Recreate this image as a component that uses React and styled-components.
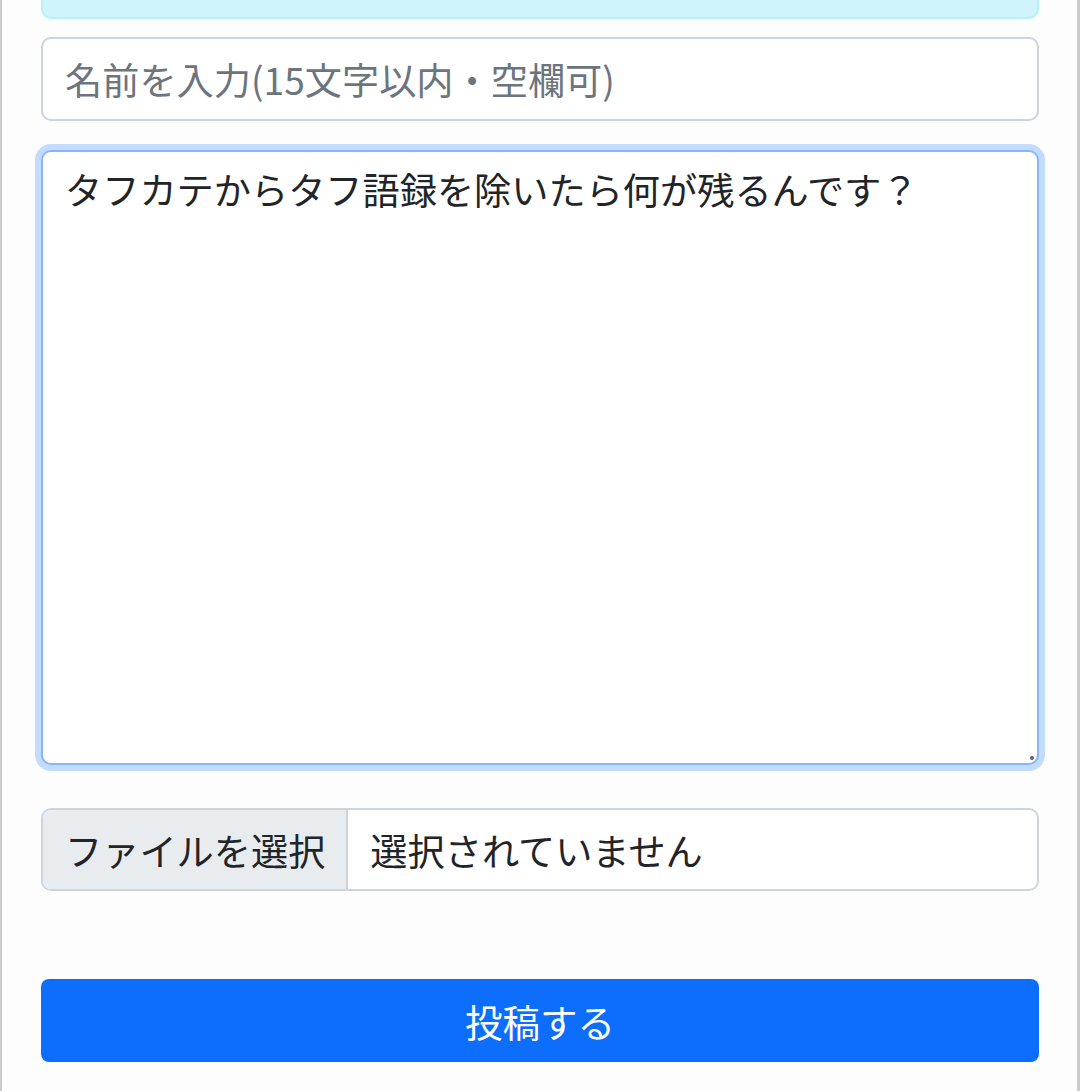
import React, { useEffect, useRef } from 'react';
import styled, { createGlobalStyle } from 'styled-components';

const GlobalStyle = createGlobalStyle`
	html, body {
		margin: 0;
		padding: 0;
		background: #fdfdfd;
	}
	body {
		font-family: "Noto Sans CJK JP", "Noto Sans", sans-serif;
		color: #212529;
	}
	* {
		box-sizing: border-box;
	}
`;

const Page = styled.div`
	min-height: 1091px;
	border-left: 2px solid #cbcbcb;
	border-right: 3px solid #cbcbcb;
	background: #fdfdfd;
	padding: 0 38px 0 39px;
`;

const Alert = styled.div`
	height: 19px;
	background: #cff4fc;
	border: 2px solid #b6effb;
	border-top: none;
	border-radius: 0 0 10px 10px;
`;

const Form = styled.form`
	display: flex;
	flex-direction: column;
`;

const NameInput = styled.input`
	display: block;
	width: 100%;
	height: 84px;
	margin-top: 18px;
	padding: 0 22px;
	font-family: inherit;
	font-size: 37.2px;
	color: #212529;
	background: #fff;
	border: 2px solid #ced4da;
	border-radius: 10px;
	outline: none;

	&::placeholder {
		color: #6c757d;
		opacity: 1;
	}
`;

const AreaWrap = styled.div`
	position: relative;
	margin-top: 29px;

	/* resize grip dot */
	&::after {
		content: '';
		position: absolute;
		right: 5px;
		bottom: 5px;
		width: 4px;
		height: 4px;
		border-radius: 50%;
		background: #5f5f5f;
		pointer-events: none;
	}
`;

const TextArea = styled.textarea`
	display: block;
	width: 100%;
	height: 615px;
	padding: 10px 22px;
	font-family: inherit;
	font-size: 37.2px;
	line-height: 1.5;
	color: #212529;
	caret-color: #212529;
	background: #fff;
	border: 2px solid #86b7fe;
	border-radius: 10px;
	box-shadow: 0 0 0 6px #c2dbfe;
	outline: none;
	resize: none;
`;

const FileRow = styled.label`
	display: flex;
	align-items: stretch;
	height: 83px;
	margin-top: 43px;
	background: #fff;
	border: 2px solid #ced4da;
	border-radius: 10px;
	overflow: hidden;
	font-size: 37.2px;
	cursor: pointer;
`;

const FileButton = styled.span`
	display: flex;
	align-items: center;
	padding: 0 21px 0 22px;
	background: #e9ecef;
	border-right: 2px solid #ced4da;
	color: #212529;
`;

const FileName = styled.span`
	display: flex;
	align-items: center;
	padding: 0 22px;
	color: #212529;
`;

const HiddenFile = styled.input`
	display: none;
`;

const SubmitButton = styled.button`
	display: block;
	width: 100%;
	height: 83px;
	margin-top: 88px;
	background: #0d6efd;
	color: #fff;
	border: none;
	border-radius: 8px;
	font-family: inherit;
	font-size: 37.5px;
	cursor: pointer;
`;

const App = () => {
	const areaRef = useRef(null);
	const message = 'タフカテからタフ語録を除いたら何が残るんです？';

	useEffect(() => {
		const el = areaRef.current;
		if (el) {
			el.focus();
			el.setSelectionRange(message.length, message.length);
		}
	}, []);

	return (
		<>
			<GlobalStyle />
			<Page>
				<Alert />
				<Form onSubmit={(e) => e.preventDefault()}>
					<NameInput type="text" placeholder="名前を入力(15文字以内・空欄可)" />
					<AreaWrap>
						<TextArea ref={areaRef} defaultValue={message} />
					</AreaWrap>
					<FileRow>
						<FileButton>ファイルを選択</FileButton>
						<FileName>選択されていません</FileName>
						<HiddenFile type="file" />
					</FileRow>
					<SubmitButton type="submit">投稿する</SubmitButton>
				</Form>
			</Page>
		</>
	);
};

export default App;
